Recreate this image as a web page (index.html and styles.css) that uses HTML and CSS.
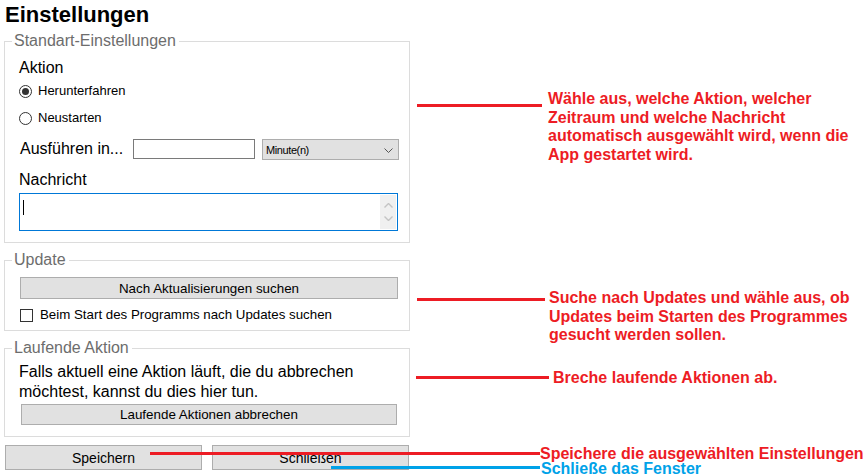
FILE: index.html
```html
<!DOCTYPE html>
<html lang="de">
<head>
<meta charset="utf-8">
<title>Einstellungen</title>
<link rel="stylesheet" href="styles.css">
</head>
<body>
<div class="page">
  <div class="form">
    <h1 class="title">Einstellungen</h1>

    <fieldset class="group group-std">
      <legend class="legend">Standart-Einstellungen</legend>
      <div class="content">
        <div class="label label-aktion">Aktion</div>
        <div class="radio-row row-r1"><span class="radio checked"></span><span class="small">Herunterfahren</span></div>
        <div class="radio-row row-r2"><span class="radio"></span><span class="small">Neustarten</span></div>
        <div class="run-row">
          <span class="label run-label">Ausführen in...</span>
          <span class="textbox"></span>
          <span class="select"><span class="select-text">Minute(n)</span>
            <svg class="chev" width="9" height="5" viewBox="0 0 9 5"><path d="M0.5 0.5 L4.5 4.5 L8.5 0.5" fill="none" stroke="#555" stroke-width="1"/></svg>
          </span>
        </div>
        <div class="label label-msg">Nachricht</div>
        <div class="memo">
          <span class="caret"></span>
          <span class="scroll">
            <svg width="9" height="5" viewBox="0 0 9 5"><path d="M0.5 4.5 L4.5 0.5 L8.5 4.5" fill="none" stroke="#c4c4c4" stroke-width="1.4"/></svg>
            <svg width="9" height="5" viewBox="0 0 9 5"><path d="M0.5 0.5 L4.5 4.5 L8.5 0.5" fill="none" stroke="#c4c4c4" stroke-width="1.4"/></svg>
          </span>
        </div>
      </div>
    </fieldset>

    <fieldset class="group group-upd">
      <legend class="legend">Update</legend>
      <div class="content">
        <div class="btn btn-search">Nach Aktualisierungen suchen</div>
        <div class="check-row"><span class="checkbox"></span><span class="small check-text">Beim Start des Programms nach Updates suchen</span></div>
      </div>
    </fieldset>

    <fieldset class="group group-run">
      <legend class="legend">Laufende Aktion</legend>
      <div class="content">
        <p class="info">Falls aktuell eine Aktion läuft, die du abbrechen<br>möchtest, kannst du dies hier tun.</p>
        <div class="btn btn-cancel">Laufende Aktionen abbrechen</div>
      </div>
    </fieldset>

    <div class="actions">
      <div class="btn btn-main">Speichern</div>
      <div class="btn btn-main">Schließen</div>
    </div>
  </div>

  <div class="notes">
    <div class="line red l1"></div>
    <div class="note n1">Wähle aus, welche Aktion, welcher<br>Zeitraum und welche Nachricht<br>automatisch ausgewählt wird, wenn die<br>App gestartet wird.</div>
    <div class="line red l2"></div>
    <div class="note n2">Suche nach Updates und wähle aus, ob<br>Updates beim Starten des Programmes<br>gesucht werden sollen.</div>
    <div class="line red l3"></div>
    <div class="note n3">Breche laufende Aktionen ab.</div>
    <div class="line red l4"></div>
    <div class="note tight n4">Speichere die ausgewählten Einstellungen</div>
    <div class="line blue l5"></div>
    <div class="note tight blue-text n5">Schließe das Fenster</div>
  </div>
</div>
</body>
</html>
```

FILE: styles.css
```css
* { box-sizing: border-box; }
html, body { margin: 0; padding: 0; background: #fff; }
body {
  font-family: "Liberation Sans", Arial, sans-serif;
  color: #000;
  width: 868px;
  height: 476px;
  overflow: hidden;
}
.page { position: relative; width: 868px; height: 476px; }
.form { width: 410px; }

.title {
  margin: 3px 0 0 5px;
  font-size: 22px;
  line-height: 24px;
  font-weight: bold;
}

.group {
  margin: 5px 0 0 4px;
  width: 406px;
  border: 1px solid #dcdcdc;
  padding: 0 0 0 7px;
  min-width: 0;
}
.group-upd, .group-run { margin-top: 8px; }
.legend {
  font-size: 16px;
  line-height: 18px;
  color: #6d6d6d;
  padding: 0 3px 0 2px;
}
.content { padding-left: 7px; display: flex; flex-direction: column; align-items: flex-start; }

.label { font-size: 16px; line-height: 18px; height: 18px; }
.label-aktion { margin-top: 9px; }
.label-msg { margin-top: 11px; }
.small { font-size: 13px; line-height: 16px; }
.check-text { font-size: 13.3px; }

.radio-row, .check-row { display: flex; align-items: center; height: 20px; }
.row-r1 { margin-top: 4px; }
.row-r2 { margin-top: 7px; }
.radio {
  width: 13px; height: 13px;
  border: 1px solid #333;
  border-radius: 50%;
  margin-right: 6px;
  display: flex; align-items: center; justify-content: center;
}
.radio.checked::after {
  content: "";
  width: 7px; height: 7px;
  border-radius: 50%;
  background: #333;
}

.run-row { display: flex; align-items: flex-start; margin-top: 11px; height: 21px; }
.run-label { margin-left: 1px; margin-top: 1px; width: 113px; }
.textbox {
  width: 122px; height: 20px;
  border: 1px solid #7a7a7a;
  background: #fff;
}
.select {
  margin-left: 7px;
  width: 137px; height: 21px;
  border: 1px solid #adadad;
  background: #e1e1e1;
  display: flex; align-items: center; justify-content: space-between;
  padding: 0 5px 0 3px;
}
.select-text { font-size: 11px; letter-spacing: -0.4px; color: #000; }
.chev { margin-top: 1px; }

.memo {
  margin-top: 4px;
  width: 379px; height: 38px;
  border: 1px solid #0078d7;
  display: flex; justify-content: space-between;
  padding: 1px;
}
.caret { width: 1px; height: 15px; background: #000; margin: 5px 0 0 2px; }
.scroll {
  width: 16px; height: 100%;
  background: #f0f0f0;
  display: flex; flex-direction: column; align-items: center; justify-content: space-around;
  padding: 4px 0;
}

.group-std { padding-bottom: 11px; }

.btn {
  background: #e1e1e1;
  border: 1px solid #adadad;
  font-size: 13.4px;
  display: flex; align-items: center; justify-content: center;
}
.btn-search { margin: 8px 0 0 1px; width: 378px; height: 22px; }
.check-row { margin-top: 8px; height: 16px; }
.checkbox {
  width: 13px; height: 13px;
  border: 1px solid #333;
  margin: 0 7px 0 1px;
}
.group-upd { padding-bottom: 7px; }

.info { margin: 5px 0 0 0; font-size: 16px; line-height: 20px; }
.btn-cancel { margin: 2px 0 0 2px; width: 376px; height: 21px; }
.group-run { padding-bottom: 11px; }

.actions { display: flex; gap: 10px; margin: 8px 0 0 5px; }
.btn-main { width: 197px; height: 25px; font-size: 14px; }

/* annotation overlay */
.notes { position: absolute; inset: 0; pointer-events: none; }
.line { position: absolute; height: 3px; }
.red { background: #ed1c24; }
.blue { background: #00a2e8; }
.note {
  position: absolute;
  font-size: 16px;
  line-height: 18.5px;
  font-weight: bold;
  color: #ed1c24;
  white-space: nowrap;
}
.note.tight { line-height: 14px; }
.blue-text { color: #00a2e8; }
.l1 { left: 417px; top: 101px; width: 125px; }
.n1 { left: 548px; top: 87px; }
.l2 { left: 417px; top: 295px; width: 128px; }
.n2 { left: 549px; top: 286px; }
.l3 { left: 416px; top: 373px; width: 133px; }
.n3 { left: 553px; top: 366px; }
.l4 { left: 150px; top: 449px; width: 390px; }
.n4 { left: 540px; top: 444px; }
.l5 { left: 331px; top: 463px; width: 209px; }
.n5 { left: 541px; top: 459px; }
```
